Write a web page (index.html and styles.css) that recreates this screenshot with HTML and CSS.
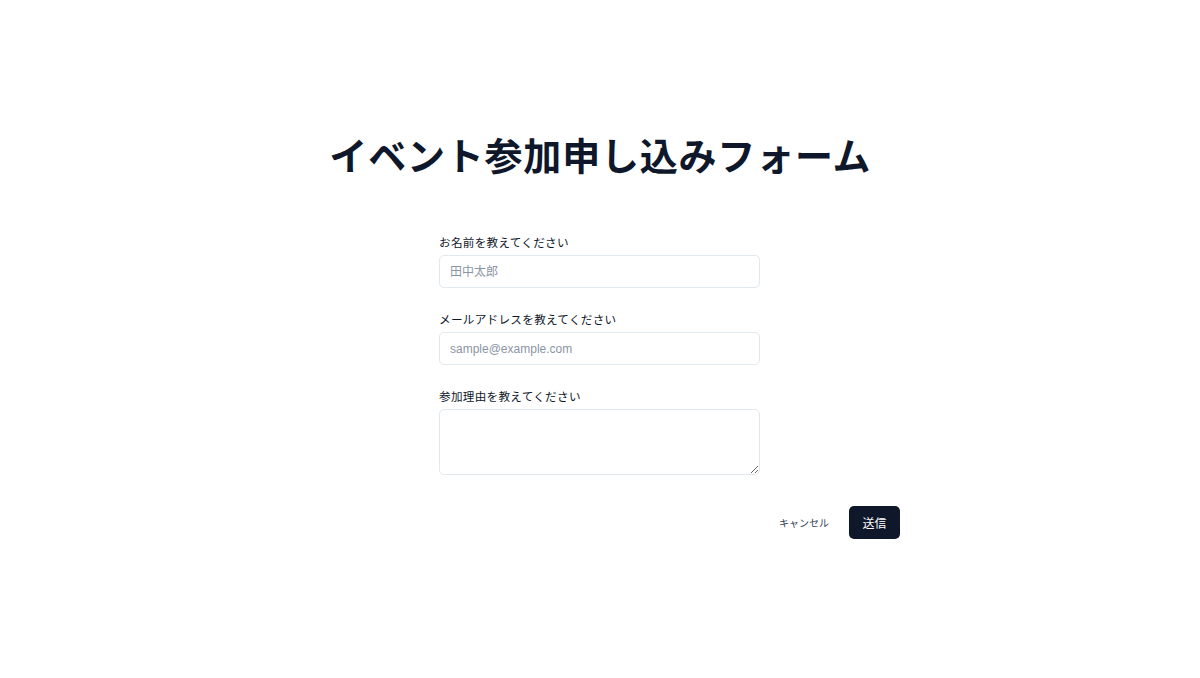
FILE: index.html
```html
<!DOCTYPE html>
<html lang="ja">
<head>
  <meta charset="UTF-8">
  <meta name="viewport" content="width=device-width, initial-scale=1.0">
  <title>イベント参加申し込みフォーム</title>
  <link rel="stylesheet" href="styles.css">
</head>
<body>
  <main class="page">
    <h1 class="title">イベント参加申し込みフォーム</h1>
    <form class="entry-form">
      <div class="fields">
        <div class="field">
          <label for="name">お名前を教えてください</label>
          <input type="text" id="name" placeholder="田中太郎">
        </div>
        <div class="field">
          <label for="email">メールアドレスを教えてください</label>
          <input type="email" id="email" placeholder="sample@example.com">
        </div>
        <div class="field">
          <label for="reason">参加理由を教えてください</label>
          <textarea id="reason"></textarea>
        </div>
      </div>
      <div class="actions">
        <button type="button" class="btn-ghost">キャンセル</button>
        <button type="submit" class="btn-primary">送信</button>
      </div>
    </form>
  </main>
</body>
</html>
```

FILE: styles.css
```css
body {
  margin: 0;
  padding: 0;
  background-color: #fff;
  color: #0f172a;
  font-family: "Liberation Sans", "Noto Sans CJK JP", sans-serif;
}

.page {
  display: flex;
  flex-direction: column;
  align-items: center;
  padding-top: 137px;
}

.title {
  margin: 0 0 58px;
  padding-left: 0.8px; /* balance the trailing letter-spacing */
  font-size: 38px;
  line-height: 40px;
  font-weight: 700;
  letter-spacing: 0.8px;
  color: #0f172a;
}

.entry-form {
  width: 600px;
}

.fields {
  width: 321px;
  margin-left: 139px;
  display: flex;
  flex-direction: column;
  gap: 24px;
}

.field {
  display: flex;
  flex-direction: column;
  gap: 5px;
}

label {
  font-size: 11.6px;
  line-height: 15px;
  letter-spacing: 0.3px;
  color: #0f172a;
}

input,
textarea {
  box-sizing: border-box;
  width: 100%;
  margin: 0;
  padding: 0 10px;
  border: 1px solid #e2e8f0;
  border-radius: 5px;
  background: #fff;
  font-family: inherit;
  font-size: 12px;
  color: #0f172a;
  outline: none;
}

input {
  height: 33px;
}

textarea {
  height: 66px;
  padding: 6px 10px;
  resize: vertical;
}

input::placeholder {
  color: #8b95a5;
}

.actions {
  display: flex;
  justify-content: flex-end;
  gap: 9px;
  margin-top: 31px;
}

.actions button {
  height: 33px;
  border: none;
  border-radius: 5px;
  font-family: inherit;
  cursor: pointer;
}

.btn-ghost {
  padding: 0 11px;
  background: none;
  color: #334155;
  font-size: 10px;
}

.btn-primary {
  width: 51px;
  background-color: #0f172a;
  color: #fff;
  font-size: 12px;
}
```
